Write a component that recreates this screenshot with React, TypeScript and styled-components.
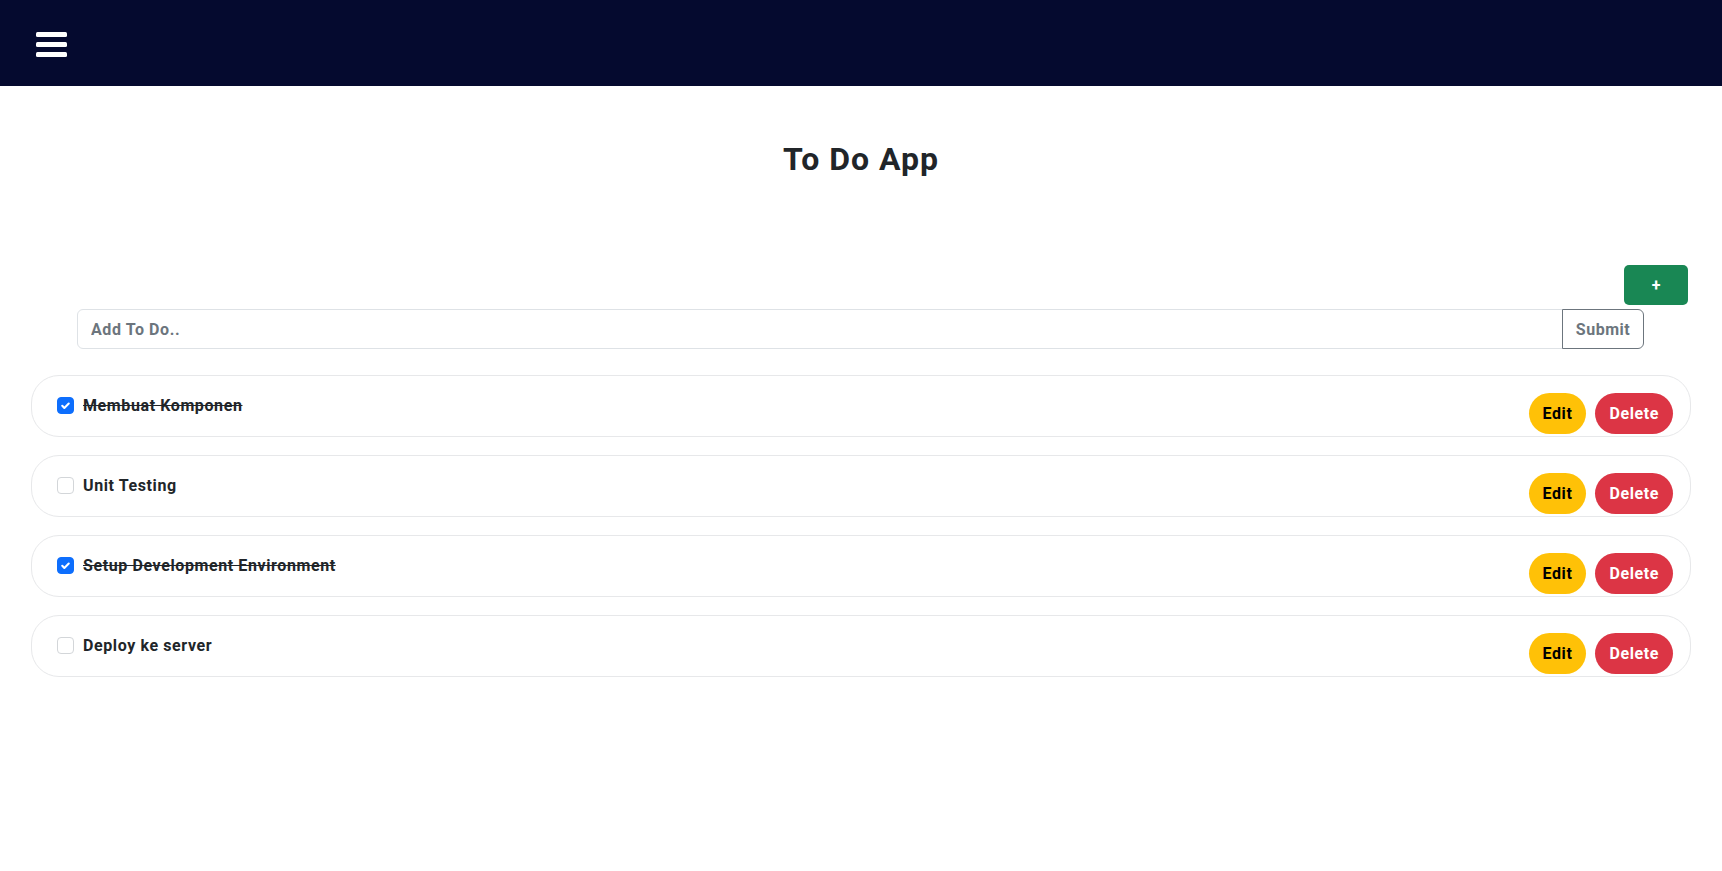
import React, { useState } from "react";
import styled, { createGlobalStyle, css } from "styled-components";

const GlobalStyle = createGlobalStyle`
  * { box-sizing: border-box; }
  body {
    margin: 0;
    font-family: Roboto, "Liberation Sans", Arial, sans-serif;
    color: #212529;
    background: #ffffff;
  }
`;

const Navbar = styled.nav`
  height: 86px;
  background: #050a2f;
  display: flex;
  align-items: center;
  padding-left: 36px;
`;

const MenuButton = styled.button`
  width: 31px;
  height: 25px;
  padding: 0;
  border: none;
  background: transparent;
  display: flex;
  flex-direction: column;
  justify-content: space-between;
  cursor: pointer;
  margin-top: 2px;
`;

const MenuBar = styled.span`
  display: block;
  width: 31px;
  height: 5px;
  background: #ffffff;
  border-radius: 1.5px;
`;

const Main = styled.main`
  display: flex;
  flex-direction: column;
  padding: 0 31px;
`;

const Title = styled.h1`
  margin: 54px 0 0;
  font-size: 32px;
  font-weight: 700;
  line-height: 1.2;
  letter-spacing: 1px;
  text-align: center;
  color: #212529;
`;

const AddRow = styled.div`
  display: flex;
  justify-content: flex-end;
  margin-top: 87px;
  padding-right: 3px;
`;

const AddButton = styled.button`
  width: 64px;
  height: 40px;
  border: none;
  border-radius: 5px;
  background: #198754;
  color: #ffffff;
  font-family: inherit;
  font-size: 16px;
  font-weight: 700;
  cursor: pointer;
`;

const InputGroup = styled.form`
  display: flex;
  margin: 4px 47px 0 46px;
`;

const TodoInput = styled.input`
  flex: 1;
  height: 40px;
  border: 1px solid #dee2e6;
  border-radius: 6px 0 0 6px;
  padding: 0 13px;
  font-family: inherit;
  font-size: 16px;
  font-weight: 700;
  letter-spacing: 0.6px;
  color: #212529;
  outline: none;
  &::placeholder {
    color: #6c757d;
    font-weight: 700;
  }
`;

const SubmitButton = styled.button`
  width: 82px;
  height: 40px;
  margin-left: -1px;
  border: 1px solid #6c757d;
  border-radius: 0 6px 6px 0;
  background: #ffffff;
  color: #6c757d;
  font-family: inherit;
  font-size: 16px;
  font-weight: 700;
  letter-spacing: 0.5px;
  cursor: pointer;
`;

const List = styled.ul`
  list-style: none;
  margin: 26px 0 0;
  padding: 0;
  display: flex;
  flex-direction: column;
  gap: 18px;
`;

const Item = styled.li`
  height: 62px;
  border: 1px solid #e7e8ea;
  border-radius: 28px;
  padding: 17px 17px 0 25px;
  display: flex;
  justify-content: space-between;
  align-items: flex-start;
`;

const Label = styled.label`
  display: flex;
  align-items: center;
  gap: 9px;
  height: 24px;
`;

const CheckBox = styled.span<{ $checked: boolean }>`
  width: 17px;
  height: 17px;
  border-radius: 4px;
  display: flex;
  align-items: center;
  justify-content: center;
  ${(p) =>
    p.$checked
      ? css`
          background: #0d6efd;
          border: 1px solid #0d6efd;
        `
      : css`
          background: #ffffff;
          border: 1px solid #d3d6d9;
        `}
`;

const ItemText = styled.span<{ $done: boolean }>`
  font-size: 16px;
  font-weight: 700;
  letter-spacing: 0.6px;
  color: #212529;
  text-decoration: ${(p) => (p.$done ? "line-through" : "none")};
`;

const Actions = styled.div`
  display: flex;
  gap: 9px;
`;

const PillButton = styled.button<{ $variant: "edit" | "delete" }>`
  height: 41px;
  padding: 0 14px;
  border: none;
  border-radius: 21px;
  font-family: inherit;
  font-size: 16px;
  font-weight: 700;
  letter-spacing: 0.6px;
  cursor: pointer;
  ${(p) =>
    p.$variant === "edit"
      ? css`
          background: #ffc107;
          color: #000000;
        `
      : css`
          background: #dc3545;
          color: #ffffff;
        `}
`;

const CheckIcon = () => (
  <svg width="13" height="13" viewBox="0 0 20 20" fill="none">
    <path
      d="M5 10.5l3.2 3.2L15 7"
      stroke="#ffffff"
      strokeWidth="3.2"
      strokeLinecap="round"
      strokeLinejoin="round"
    />
  </svg>
);

type Todo = { id: number; text: string; done: boolean };

const initial: Todo[] = [
  { id: 1, text: "Membuat Komponen", done: true },
  { id: 2, text: "Unit Testing", done: false },
  { id: 3, text: "Setup Development Environment", done: true },
  { id: 4, text: "Deploy ke server", done: false },
];

export default function App() {
  const [todos, setTodos] = useState<Todo[]>(initial);

  const toggle = (id: number) =>
    setTodos((t) => t.map((x) => (x.id === id ? { ...x, done: !x.done } : x)));

  return (
    <>
      <GlobalStyle />
      <Navbar>
        <MenuButton aria-label="menu">
          <MenuBar />
          <MenuBar />
          <MenuBar />
        </MenuButton>
      </Navbar>
      <Main>
        <Title>To Do App</Title>
        <AddRow>
          <AddButton>+</AddButton>
        </AddRow>
        <InputGroup onSubmit={(e) => e.preventDefault()}>
          <TodoInput placeholder="Add To Do.." />
          <SubmitButton type="submit">Submit</SubmitButton>
        </InputGroup>
        <List>
          {todos.map((t) => (
            <Item key={t.id}>
              <Label onClick={() => toggle(t.id)}>
                <CheckBox $checked={t.done}>{t.done && <CheckIcon />}</CheckBox>
                <ItemText $done={t.done}>{t.text}</ItemText>
              </Label>
              <Actions>
                <PillButton $variant="edit">Edit</PillButton>
                <PillButton $variant="delete">Delete</PillButton>
              </Actions>
            </Item>
          ))}
        </List>
      </Main>
    </>
  );
}
